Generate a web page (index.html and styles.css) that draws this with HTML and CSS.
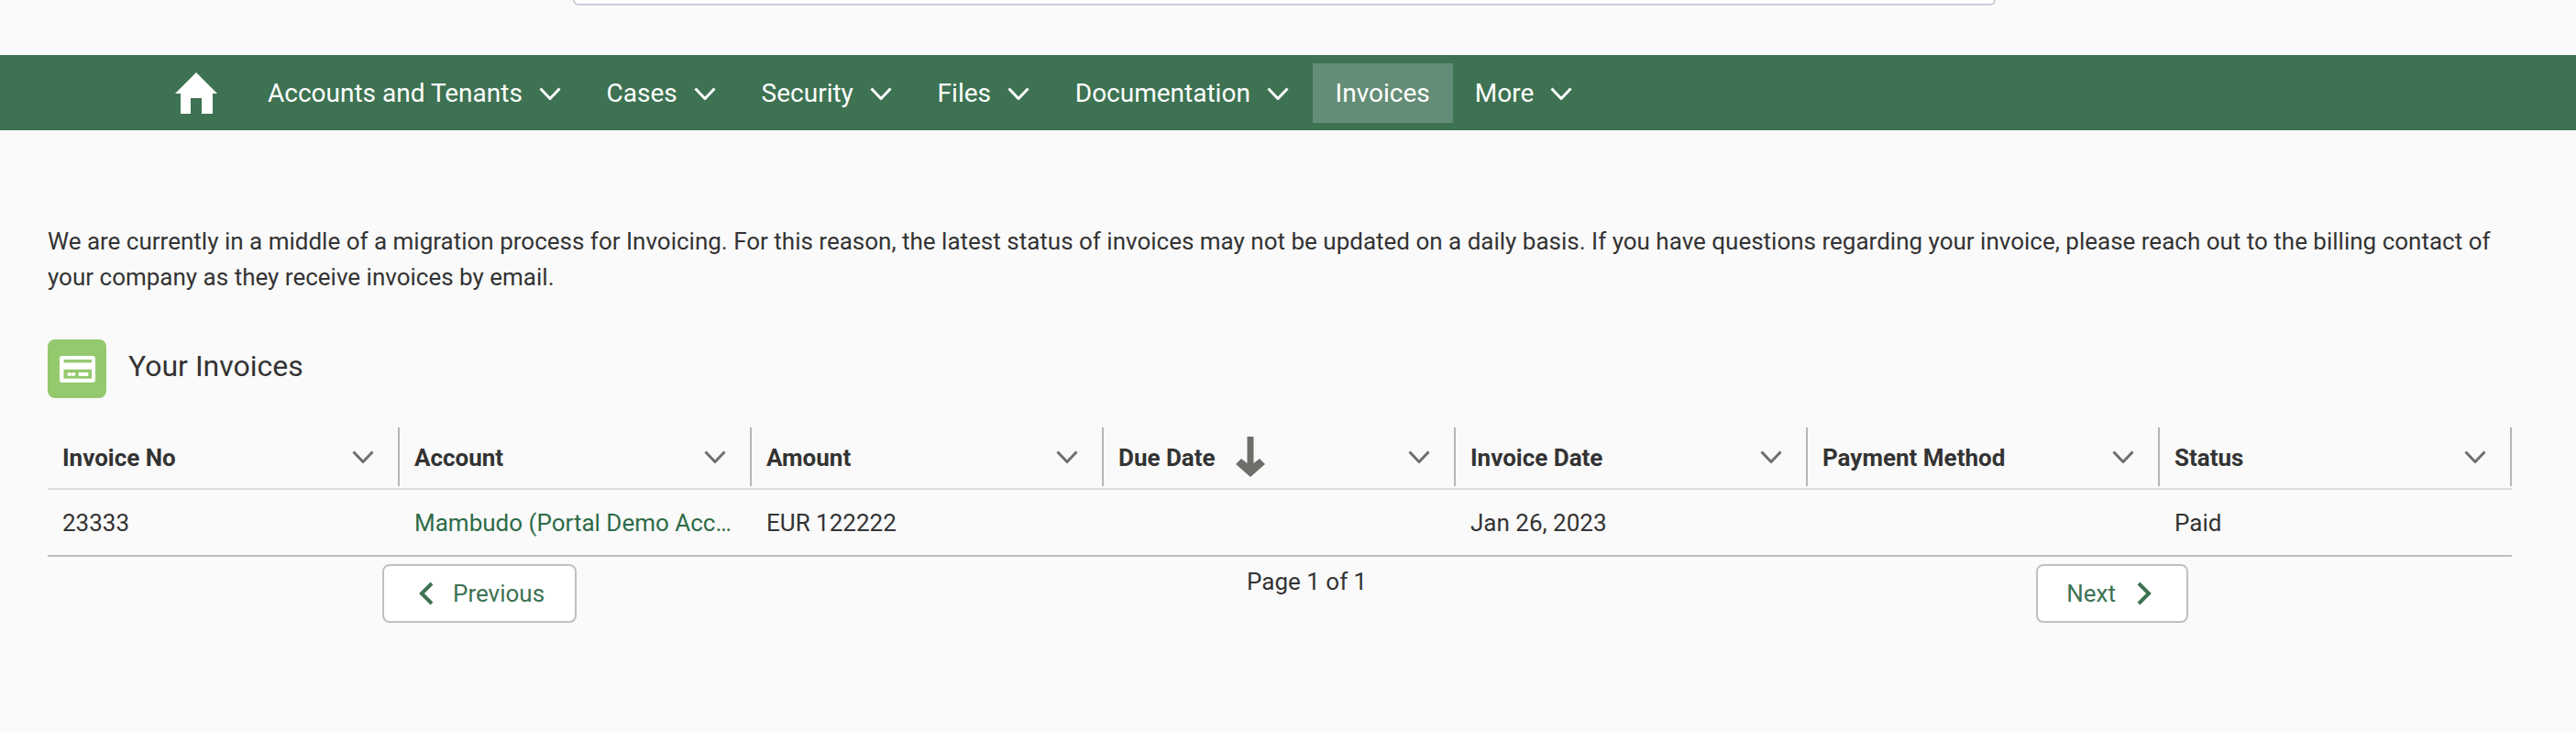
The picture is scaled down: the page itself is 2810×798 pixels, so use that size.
FILE: index.html
```html
<!DOCTYPE html>
<html lang="en">
<head>
<meta charset="utf-8">
<title>Your Invoices</title>
<link rel="stylesheet" href="styles.css">
</head>
<body>
<header class="top"><div class="search"></div></header>
<nav class="nav">
  <svg class="home" viewBox="0 0 46 45"><path d="M23 0 46 23H41V45H29V28H17V45H6V23H0Z"/></svg>
  <a class="item">Accounts and Tenants<svg class="chev" viewBox="0 0 24 14"><path d="M1.5 1.5 12 12.5 22.5 1.5"/></svg></a>
  <a class="item">Cases<svg class="chev" viewBox="0 0 24 14"><path d="M1.5 1.5 12 12.5 22.5 1.5"/></svg></a>
  <a class="item">Security<svg class="chev" viewBox="0 0 24 14"><path d="M1.5 1.5 12 12.5 22.5 1.5"/></svg></a>
  <a class="item">Files<svg class="chev" viewBox="0 0 24 14"><path d="M1.5 1.5 12 12.5 22.5 1.5"/></svg></a>
  <a class="item">Documentation<svg class="chev" viewBox="0 0 24 14"><path d="M1.5 1.5 12 12.5 22.5 1.5"/></svg></a>
  <a class="item active">Invoices</a>
  <a class="item">More<svg class="chev" viewBox="0 0 24 14"><path d="M1.5 1.5 12 12.5 22.5 1.5"/></svg></a>
</nav>
<main class="main">
  <p class="notice">We are currently in a middle of a migration process for Invoicing. For this reason, the latest status of invoices may not be updated on a daily basis. If you have questions regarding your invoice, please reach out to the billing contact of your company as they receive invoices by email.</p>
  <div class="title-row">
    <span class="badge"><svg viewBox="0 0 39 29"><rect width="39" height="29" rx="3" class="card"/><rect x="4.5" y="4" width="30.5" height="3.4" class="card-band"/><rect x="4.5" y="14.7" width="30.5" height="10" class="card-band"/><rect x="8.4" y="18" width="4.6" height="4" rx="2" class="card-chip"/><rect x="12.8" y="18" width="4.6" height="4" rx="2" class="card-chip"/><rect x="20.7" y="18" width="10.7" height="4" rx="1" class="card-chip"/></svg></span>
    <h1 class="title">Your Invoices</h1>
  </div>
  <div class="table">
    <div class="head">
      <div class="th"><span>Invoice No</span><svg class="chev dark" viewBox="0 0 24 14"><path d="M1.5 1.5 12 12.5 22.5 1.5"/></svg></div>
      <div class="th"><span>Account</span><svg class="chev dark" viewBox="0 0 24 14"><path d="M1.5 1.5 12 12.5 22.5 1.5"/></svg></div>
      <div class="th"><span>Amount</span><svg class="chev dark" viewBox="0 0 24 14"><path d="M1.5 1.5 12 12.5 22.5 1.5"/></svg></div>
      <div class="th"><span>Due Date</span><svg class="sort" viewBox="0 0 32 44"><path d="M12.5 0H19.5V29L26 24 32 30 16 44 0 30 6 24 12.5 29Z"/></svg><svg class="chev dark" viewBox="0 0 24 14"><path d="M1.5 1.5 12 12.5 22.5 1.5"/></svg></div>
      <div class="th"><span>Invoice Date</span><svg class="chev dark" viewBox="0 0 24 14"><path d="M1.5 1.5 12 12.5 22.5 1.5"/></svg></div>
      <div class="th"><span>Payment Method</span><svg class="chev dark" viewBox="0 0 24 14"><path d="M1.5 1.5 12 12.5 22.5 1.5"/></svg></div>
      <div class="th"><span>Status</span><svg class="chev dark" viewBox="0 0 24 14"><path d="M1.5 1.5 12 12.5 22.5 1.5"/></svg></div>
    </div>
    <div class="row">
      <div class="td">23333</div>
      <div class="td link">Mambudo (Portal Demo Acc…</div>
      <div class="td">EUR 122222</div>
      <div class="td"></div>
      <div class="td">Jan 26, 2023</div>
      <div class="td"></div>
      <div class="td">Paid</div>
    </div>
  </div>
  <div class="pager">
    <button class="btn prev"><svg class="arrow" viewBox="0 0 16 26"><path d="M14 2 3 13 14 24"/></svg>Previous</button>
    <span class="page">Page 1 of 1</span>
    <button class="btn next">Next<svg class="arrow" viewBox="0 0 16 26"><path d="M2 2 13 13 2 24"/></svg></button>
  </div>
</main>
</body>
</html>
```
FILE: styles.css
```css
* { box-sizing: border-box; }
html, body { margin: 0; background: #fafafa; }
body { font-family: Roboto, "Liberation Sans", sans-serif; color: #333; width: 2810px; height: 798px; overflow: hidden; }
.top { height: 60px; padding-left: 625px; }
.search { width: 1552px; height: 6px; background: #fff; border: 2px solid #c9ced9; border-top: 0; border-radius: 0 0 8px 8px; }
.nav { height: 82px; background: #3d7252; padding-left: 191px; display: flex; align-items: center; color: #fff; font-size: 28px; }
.home { width: 46px; height: 45px; margin-right: 31px; fill: #fff; flex: none; margin-top: 1px; }
.item { height: 65px; padding: 0 25.75px 0 24px; display: flex; align-items: center; gap: 18px; white-space: nowrap; margin-top: 1px; }
.item.active { background: #638d76; padding: 0 25px; }
.chev { width: 24px; height: 14px; fill: none; stroke: #fff; stroke-width: 3; flex: none; }
.chev.dark { stroke: #706e6b; margin-left: auto; }
.main { padding: 102px 70px 0 52px; }
.notice { margin: 0; font-size: 26px; line-height: 39px; }
.title-row { display: flex; align-items: center; margin-top: 48px; gap: 24px; }
.badge { width: 64px; height: 64px; border-radius: 8px; background: #95c96e; display: flex; align-items: center; justify-content: center; flex: none; }
.badge svg { width: 39px; height: 29px; }
.card { fill: #fff; }
.card-band { fill: #95c96e; }
.card-chip { fill: #fff; }
.title { margin: 0; font-size: 32px; font-weight: 400; line-height: 56px; padding-bottom: 6px; }
.table { margin-top: 32px; width: 2688px; }
.head { display: grid; grid-template-columns: repeat(7, 384px); height: 68px; border-bottom: 2px solid #dddddd; }
.th { height: 64px; display: flex; align-items: center; padding: 0 26px 0 16px; border-right: 2px solid #b5b5b5; font-size: 26px; font-weight: 700; }
.th span { padding-top: 2px; }
.sort { width: 32px; height: 44px; fill: #706e6b; margin-left: 22px; }
.row { display: grid; grid-template-columns: repeat(7, 384px); height: 73px; border-bottom: 2px solid #bdbdbd; align-items: center; }
.td { padding: 0 22px 0 16px; font-size: 26px; white-space: nowrap; }
.link { color: #2e6b47; }
.pager { display: flex; align-items: flex-start; margin-top: 8px; padding-left: 365px; }
.btn { height: 64px; background: #fff; border: 2px solid #c0c0c0; border-radius: 8px; color: #3d7252; font: 400 26px Roboto, "Liberation Sans", sans-serif; display: flex; align-items: center; padding: 0; flex: none; }
.prev { width: 212px; padding-left: 38px; gap: 21px; }
.next { width: 166px; padding-left: 31px; gap: 23px; margin-left: 730px; }
.arrow { width: 16px; height: 26px; fill: none; stroke: #3d7252; stroke-width: 4; flex: none; }
.page { font-size: 26px; line-height: 39px; margin-left: 731px; }
```
